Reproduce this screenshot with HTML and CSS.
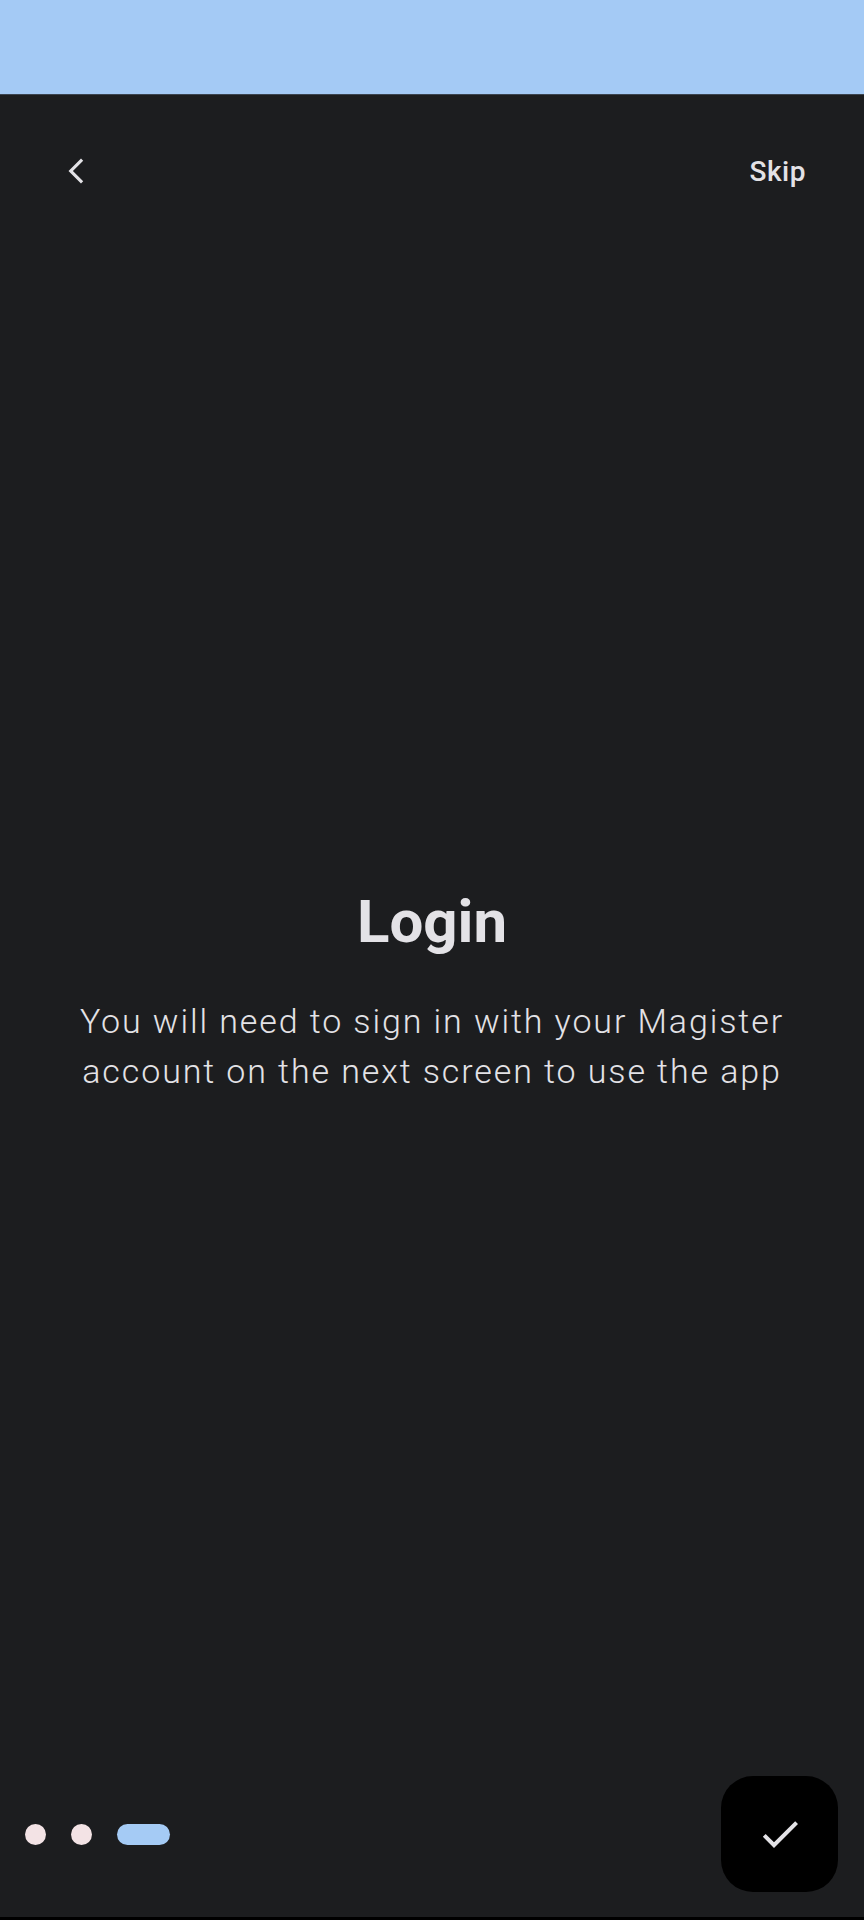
FILE: index.html
```html
<!DOCTYPE html>
<html lang="en">
<head>
<meta charset="utf-8">
<title>Login</title>
<link rel="stylesheet" href="styles.css">
</head>
<body>
<div class="screen">
  <div class="status-bar"></div>
  <header class="top-bar">
    <button class="back-btn" aria-label="Back">
      <svg width="30" height="30" viewBox="0 0 24 24"><path d="M17.77 3.77 16 2 6 12l10 10 1.77-1.77L9.54 12z" fill="#e3e2e6"/></svg>
    </button>
    <button class="skip-btn">Skip</button>
  </header>
  <main class="content">
    <h1 class="title">Login</h1>
    <p class="desc">You will need to sign in with your Magister account on the next screen to use the app</p>
  </main>
  <footer class="bottom-row">
    <div class="dots">
      <span class="dot"></span>
      <span class="dot"></span>
      <span class="dot active"></span>
    </div>
    <button class="fab" aria-label="Done">
      <svg width="48" height="48" viewBox="0 0 24 24"><path d="M9 16.17 4.83 12l-1.42 1.41L9 19 21 7l-1.41-1.41z" fill="#e3e2e6"/></svg>
    </button>
  </footer>
  <div class="nav-strip"></div>
</div>
</body>
</html>
```
FILE: styles.css
```css
* { box-sizing: border-box; }
html, body {
  margin: 0;
  padding: 0;
  background: #1c1d1f;
}
body {
  font-family: Roboto, "Noto Sans", "Liberation Sans", sans-serif;
  color: #e3e2e6;
}
.screen {
  width: 864px;
  height: 1920px;
  display: flex;
  flex-direction: column;
  background: #1c1d1f;
}
.status-bar {
  height: 95px;
  flex: none;
  background: #a4caf5;
  border-bottom: 1px solid #3b4450;
}
.top-bar {
  height: 152px;
  flex: none;
  display: flex;
  align-items: center;
  justify-content: space-between;
  padding: 0 58px 0 61px;
}
.back-btn, .skip-btn, .fab {
  background: none;
  border: none;
  padding: 0;
  margin: 0;
  color: inherit;
  font-family: inherit;
  cursor: pointer;
}
.back-btn {
  width: 30px;
  height: 30px;
  display: flex;
}
.skip-btn {
  font-size: 28px;
  font-weight: 500;
  letter-spacing: 0.5px;
  color: #e3e2e6;
}
.content {
  flex: 1;
  display: flex;
  flex-direction: column;
  align-items: center;
  justify-content: center;
  padding: 0 40px 42px;
  text-align: center;
}
.title {
  margin: 0;
  font-size: 60px;
  line-height: 72px;
  font-weight: 700;
  color: #e3e2e6;
}
.desc {
  margin: 38px 0 0;
  font-size: 34px;
  line-height: 50px;
  font-weight: 300;
  letter-spacing: 1.9px;
  color: #e3e2e6;
}
.bottom-row {
  flex: none;
  height: 141px;
  display: flex;
  align-items: center;
  justify-content: space-between;
  padding: 0 26px 25px 25px;
}
.dots {
  display: flex;
  align-items: center;
  gap: 25px;
}
.dot {
  width: 21px;
  height: 21px;
  border-radius: 50%;
  background: #f3e3e5;
}
.dot.active {
  width: 53px;
  border-radius: 11px;
  background: #a5cbf5;
}
.fab {
  width: 117px;
  height: 116px;
  border-radius: 32px;
  background: #000;
  display: flex;
  align-items: center;
  justify-content: center;
}
.nav-strip {
  height: 3px;
  flex: none;
  background: #000;
}
```
